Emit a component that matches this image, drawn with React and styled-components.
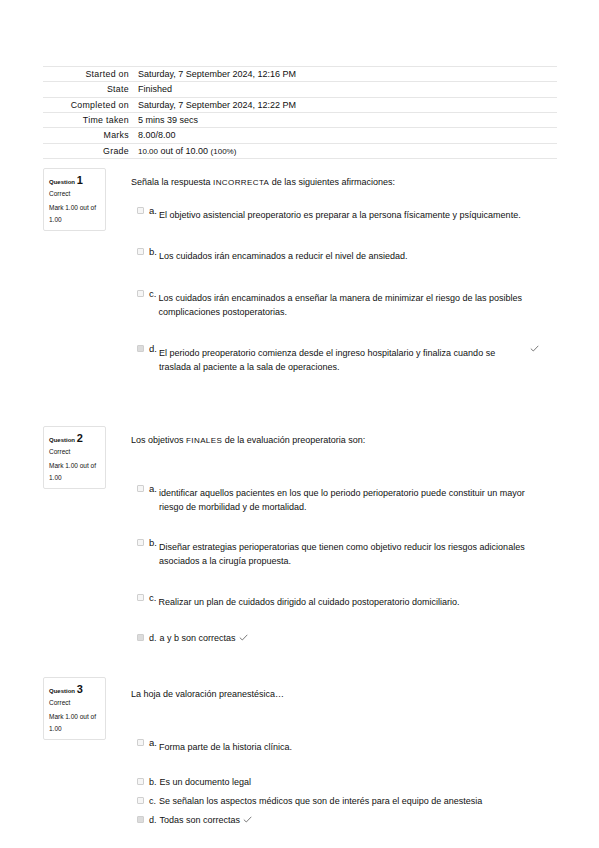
import React from "react";
import styled, { createGlobalStyle } from "styled-components";

const Global = createGlobalStyle`
  html, body { margin: 0; padding: 0; background: #fff; }
  body { font-family: "Liberation Sans", Arial, sans-serif; color: #111; }
`;

const Page = styled.div`
  width: 599px;
  padding: 66px 42px 0 43px;
  box-sizing: border-box;
`;

const SummaryTable = styled.div`
  display: flex;
  flex-direction: column;
  border-top: 1px solid #e6e6e6;
  margin-bottom: 9px;
`;

const SummaryRow = styled.div`
  display: flex;
  align-items: center;
  height: 15.33px;
  box-sizing: border-box;
  border-bottom: 1px solid #e6e6e6;
  font-size: 9px;
`;

const SummaryLabel = styled.div`
  width: 86px;
  text-align: right;
  padding-right: 9px;
  font-size: 8.8px;
  letter-spacing: 0.3px;
`;

const SummaryValue = styled.div`
  font-size: 9px;
`;

const Small = styled.span`
  font-size: 8px;
`;

const Question = styled.div`
  display: flex;
  align-items: flex-start;
  margin-bottom: ${(p) => p.$after}px;
`;

const InfoBox = styled.div`
  width: 63px;
  box-sizing: border-box;
  flex-shrink: 0;
  border: 1px solid #e2e2e2;
  border-radius: 2px;
  padding: 5px 5px 4px 5px;
  margin-right: 25px;
`;

const QTitle = styled.div`
  line-height: 13px;
  height: 13px;
  font-size: 6px;
  font-weight: bold;
  white-space: nowrap;
`;

const QNo = styled.span`
  font-size: 11px;
`;

const QState = styled.div`
  margin-top: 2px;
  line-height: 10px;
  font-size: 6.5px;
`;

const QMark = styled.div`
  margin-top: 3px;
  line-height: 12px;
  font-size: 6.5px;
`;

const Content = styled.div`
  flex: 1;
  padding-top: ${(p) => p.$lead}px;
`;

const Prompt = styled.div`
  font-size: 9px;
  line-height: 14px;
`;

const Caps = styled.span`
  font-size: 8px;
  letter-spacing: 0.4px;
`;

const Option = styled.div`
  display: flex;
  align-items: flex-start;
  margin-top: ${(p) => p.$top}px;
  padding-left: 6px;
  font-size: 9px;
  line-height: 14px;
`;

const Box = styled.span`
  width: 7px;
  height: 7px;
  box-sizing: border-box;
  border: 1px solid #cfcfcf;
  border-radius: 1px;
  background: ${(p) => (p.$checked ? "#dcdcdc" : "#f6f6f6")};
  margin-top: 3.5px;
  margin-right: 5px;
  flex-shrink: 0;
`;

const Letter = styled.span`
  margin-right: ${(p) => (p.$raised ? 2 : 3)}px;
  font-size: ${(p) => (p.$raised ? 9.5 : 9)}px;
  flex-shrink: 0;
`;

const OptText = styled.div`
  padding-top: ${(p) => (p.$raised ? 4 : 0)}px;
  display: flex;
  align-items: center;
`;

const Tick = styled.svg`
  width: 9px;
  height: 7px;
  margin-left: ${(p) => (p.$far ? "auto" : "3px")};
  margin-right: ${(p) => (p.$far ? "18px" : "0")};
  margin-top: ${(p) => (p.$far ? "3px" : "0")};
  flex-shrink: 0;
`;

const Check = ({ far }) => (
  <Tick $far={far} viewBox="0 0 9 7">
    <polyline points="0.8,3.6 3.3,6 8.3,0.8" fill="none" stroke="#7a7a7a" strokeWidth="1" />
  </Tick>
);

const Opt = ({ letter, top, raised, checked, tick, far, children }) => (
  <Option $top={top}>
    <Box $checked={checked} />
    <Letter $raised={raised}>{letter}.</Letter>
    <OptText $raised={raised}>
      <span>{children}</span>
      {tick && !far && <Check />}
    </OptText>
    {far && <Check far />}
  </Option>
);

const Info = ({ n }) => (
  <InfoBox>
    <QTitle>
      Question <QNo>{n}</QNo>
    </QTitle>
    <QState>Correct</QState>
    <QMark>
      Mark 1.00 out of
      <br />
      1.00
    </QMark>
  </InfoBox>
);

const summary = [
  ["Started on", "Saturday, 7 September 2024, 12:16 PM"],
  ["State", "Finished"],
  ["Completed on", "Saturday, 7 September 2024, 12:22 PM"],
  ["Time taken", "5 mins 39 secs"],
  ["Marks", "8.00/8.00"],
];

export default function App() {
  return (
    <Page>
      <Global />
      <SummaryTable>
        {summary.map(([k, v]) => (
          <SummaryRow key={k}>
            <SummaryLabel>{k}</SummaryLabel>
            <SummaryValue>{v}</SummaryValue>
          </SummaryRow>
        ))}
        <SummaryRow>
          <SummaryLabel>Grade</SummaryLabel>
          <SummaryValue>
            <Small>10.00</Small> out of 10.00 <Small>(100%)</Small>
          </SummaryValue>
        </SummaryRow>
      </SummaryTable>

      <Question $after={52}>
        <Info n={1} />
        <Content $lead={7}>
          <Prompt>
            Señala la respuesta <Caps>INCORRECTA</Caps> de las siguientes afirmaciones:
          </Prompt>
          <Opt letter="a" top={14} raised>
            El objetivo asistencial preoperatorio es preparar a la persona físicamente y psíquicamente.
          </Opt>
          <Opt letter="b" top={23} raised>
            Los cuidados irán encaminados a reducir el nivel de ansiedad.
          </Opt>
          <Opt letter="c" top={24} raised>
            Los cuidados irán encaminados a enseñar la manera de minimizar el riesgo de las posibles
            <br />
            complicaciones postoperatorias.
          </Opt>
          <Opt letter="d" top={23} raised checked tick far>
            El periodo preoperatorio comienza desde el ingreso hospitalario y finaliza cuando se
            <br />
            traslada al paciente a la sala de operaciones.
          </Opt>
        </Content>
      </Question>

      <Question $after={32}>
        <Info n={2} />
        <Content $lead={7}>
          <Prompt>
            Los objetivos <Caps>FINALES</Caps> de la evaluación preoperatoria son:
          </Prompt>
          <Opt letter="a" top={34} raised>
            identificar aquellos pacientes en los que lo periodo perioperatorio puede constituir un mayor
            <br />
            riesgo de morbilidad y de mortalidad.
          </Opt>
          <Opt letter="b" top={22} raised>
            Diseñar estrategias perioperatorias que tienen como objetivo reducir los riesgos adicionales
            <br />
            asociados a la cirugía propuesta.
          </Opt>
          <Opt letter="c" top={23} raised>
            Realizar un plan de cuidados dirigido al cuidado postoperatorio domiciliario.
          </Opt>
          <Opt letter="d" top={22} checked tick>
            a y b son correctas
          </Opt>
        </Content>
      </Question>

      <Question $after={20}>
        <Info n={3} />
        <Content $lead={10}>
          <Prompt>La hoja de valoración preanestésica…</Prompt>
          <Opt letter="a" top={35} raised>
            Forma parte de la historia clínica.
          </Opt>
          <Opt letter="b" top={21}>
            Es un documento legal
          </Opt>
          <Opt letter="c" top={5}>
            Se señalan los aspectos médicos que son de interés para el equipo de anestesia
          </Opt>
          <Opt letter="d" top={5} checked tick>
            Todas son correctas
          </Opt>
        </Content>
      </Question>
    </Page>
  );
}
